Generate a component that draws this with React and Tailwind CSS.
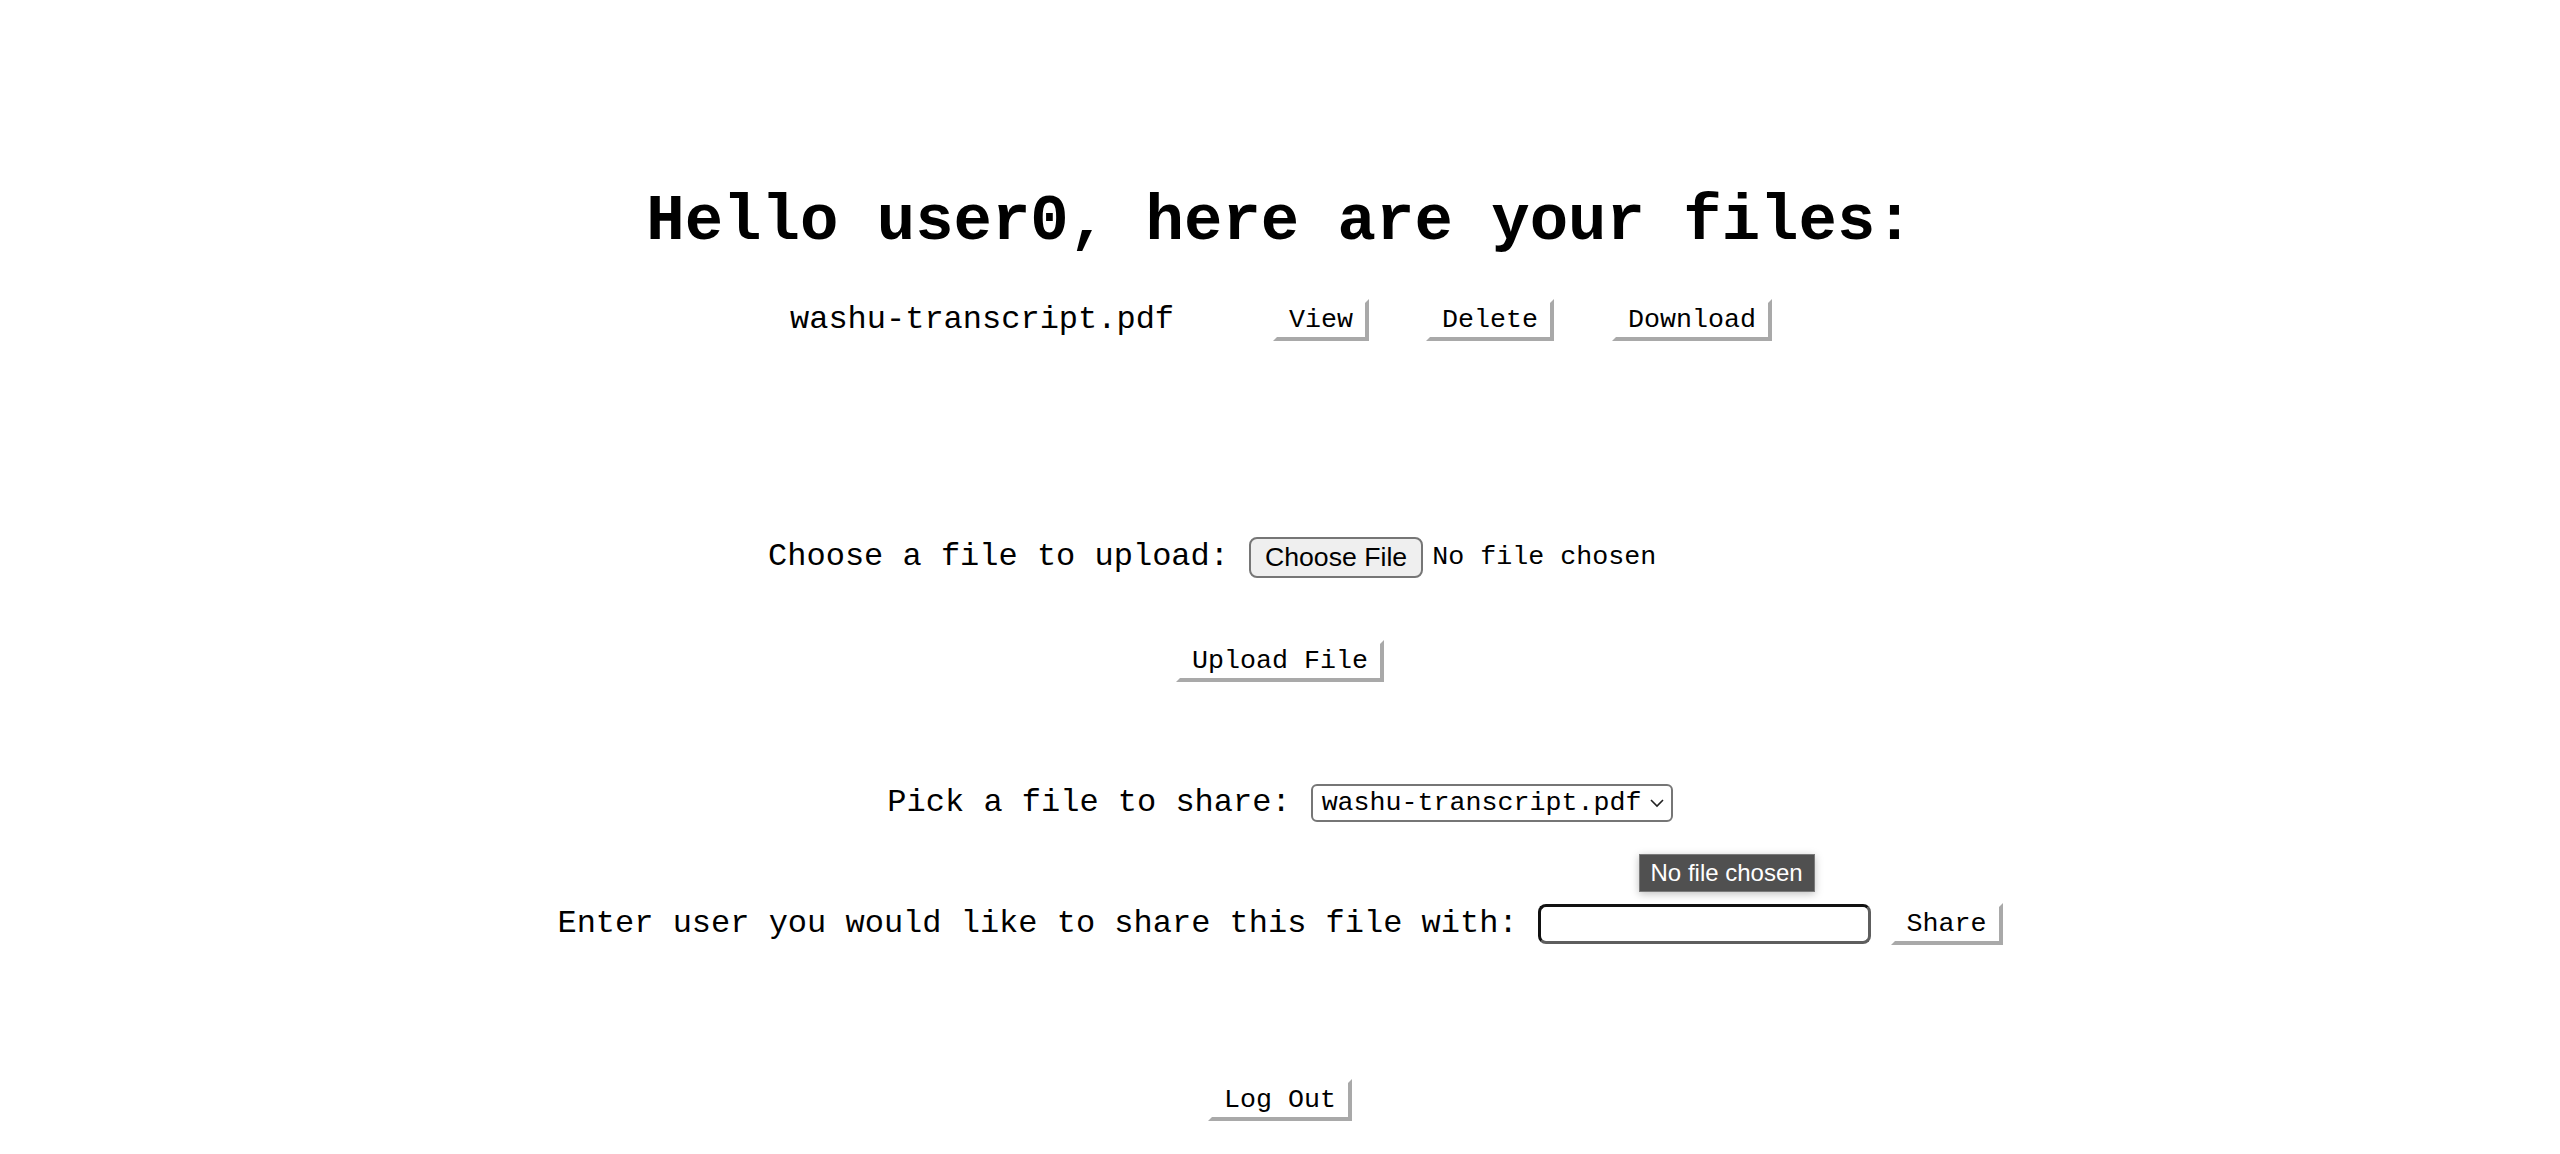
import { useState } from 'react';

const MONO = { fontFamily: '"Liberation Mono", "Courier New", monospace' };

function OldButton({ children, className = '' }) {
  return (
    <button
      type="button"
      className={`bg-white text-black text-[26.67px] leading-[30px] px-3 py-[2px] border-4 border-solid border-t-white border-l-white border-r-[#a9a9a9] border-b-[#a9a9a9] ${className}`}
      style={MONO}
    >
      {children}
    </button>
  );
}

export default function App() {
  const [shareWith, setShareWith] = useState('');
  const files = ['washu-transcript.pdf'];

  return (
    <div className="min-h-screen w-full bg-white text-black" style={MONO}>
      <div className="flex flex-col items-center pt-[182px]">
        <h1 className="h-[80px] flex items-center text-[64px] font-bold">
          Hello user0, here are your files:
        </h1>

        {files.map((f) => (
          <div key={f} className="mt-[28px] h-[60px] flex items-center text-[32px] pl-[2px]">
            <span>{f}</span>
            <OldButton className="ml-[99px]">View</OldButton>
            <OldButton className="ml-[57px]">Delete</OldButton>
            <OldButton className="ml-[58px]">Download</OldButton>
          </div>
        ))}

        {/* upload */}
        <div className="mt-[177px] h-[60px] flex items-center text-[32px]">
          <span>Choose a file to upload:</span>
          <label className="ml-[20px] w-[543px] flex items-center cursor-pointer">
            <span
              className="h-[41px] px-[14px] flex items-center rounded-lg border-2 border-[#767676] bg-[#efefef] text-[26.67px]"
              style={{ fontFamily: 'Arial, "Liberation Sans", sans-serif' }}
            >
              Choose File
            </span>
            <span className="ml-[9px] text-[26.67px]">No file chosen</span>
          </label>
        </div>

        <div className="mt-[44px] h-[60px] flex items-center">
          <OldButton>Upload File</OldButton>
        </div>

        {/* share */}
        <div className="mt-[82px] h-[60px] flex items-center text-[32px]">
          <span>Pick a file to share:</span>
          <div className="ml-[20px] h-[38px] w-[362px] flex items-center justify-between rounded-[6px] border-2 border-[#767676] pl-[9px] pr-[6px] text-[26.67px]">
            <span>washu-transcript.pdf</span>
            <svg width="16" height="12" viewBox="0 0 16 12" fill="none" stroke="#222" strokeWidth="1.6">
              <path d="M2 3 L8 9 L14 3" />
            </svg>
          </div>
        </div>

        <div className="mt-[61px] h-[60px] flex items-center text-[32px]">
          <span>Enter user you would like to share this file with:</span>
          <div className="relative ml-[20px]">
            <input
              value={shareWith}
              onChange={(e) => setShareWith(e.target.value)}
              className="block h-[40px] w-[333px] rounded-lg border-[3px] border-t-[#111] border-l-[#111] border-r-[#5e5e5e] border-b-[#5e5e5e] outline-none px-2 text-[26.67px]"
              style={MONO}
            />
            <div
              className="absolute left-[101px] top-[-50px] h-[38px] w-[176px] flex items-center justify-center bg-[#505050] border border-[#7a7a7a] text-white text-[24px] shadow-[0_2px_8px_rgba(0,0,0,0.25)] whitespace-nowrap"
              style={{ fontFamily: 'Arial, "Liberation Sans", sans-serif' }}
            >
              No file chosen
            </div>
          </div>
          <OldButton className="ml-[20px]">Share</OldButton>
        </div>

        <div className="mt-[116px] h-[60px] flex items-center">
          <OldButton>Log Out</OldButton>
        </div>
      </div>
    </div>
  );
}
